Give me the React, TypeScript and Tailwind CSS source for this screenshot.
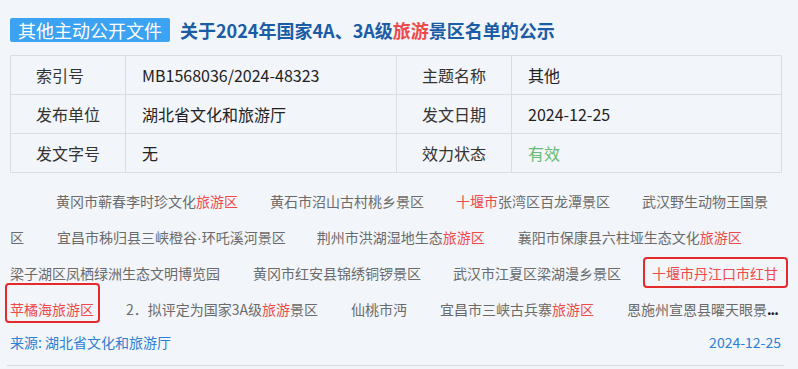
const font = { fontFamily: '"Noto Sans CJK SC", "Noto Sans", sans-serif' };

function Red({ children }: { children: React.ReactNode }) {
  return <span className="text-[#ef4a4a]">{children}</span>;
}

// red annotation frame drawn around a list item
function Boxed({ children, frame }: { children: React.ReactNode; frame: string }) {
  return (
    <span className="relative inline-block h-[36px] leading-[36px] text-[#ef4a4a]">
      {children}
      <span className={"absolute rounded-[4px] border-2 border-[#e42a2a] " + frame} />
    </span>
  );
}

const rows = [
  ["索引号", "MB1568036/2024-48323", "主题名称", "其他"],
  ["发布单位", "湖北省文化和旅游厅", "发文日期", "2024-12-25"],
  ["发文字号", "无", "效力状态", "有效"],
];

export default function App() {
  return (
    <div style={font} className="w-[798px] h-[369px] overflow-hidden bg-[#f2f5f9] pl-[10px] pt-[18px]">
      <div className="w-[771px]">
        {/* Header */}
        <div className="flex items-center h-[24px]">
          <span className="bg-[#3ca2f2] text-white text-[18px] leading-[24px] px-[8px] rounded-[2px] whitespace-nowrap">
            其他主动公开文件
          </span>
          <h1 className="ml-[10px] text-[18px] leading-[24px] font-bold text-[#1a5ca6] whitespace-nowrap">
            关于2024年国家4A、3A级<Red>旅游</Red>景区名单的公示
          </h1>
        </div>

        {/* Meta table */}
        <div className="mt-[13px] grid grid-cols-[115px_271px_115px_270px] border-t border-l border-[#d9dee5] text-[16px]">
          {rows.map((r) =>
            r.map((cell, i) => (
              <div
                key={r[0] + i}
                className={
                  "h-[39px] flex items-center border-r border-b border-[#d9dee5] whitespace-nowrap " +
                  (i % 2 === 0 ? "pl-[25px] text-[#333]" : "pl-[16px] text-[#222]")
                }
              >
                {cell === "有效" ? <span className="text-[#66bb77]">{cell}</span> : cell}
              </div>
            ))
          )}
        </div>

        {/* Summary list */}
        <div className="mt-[10px] text-[14px] text-[#6b6b6b]">
          <div className="h-[36px] leading-[36px] whitespace-nowrap pl-[46px]">
            <span>黄冈市蕲春李时珍文化<Red>旅游区</Red></span>
            <span className="ml-[32px]">黄石市沼山古村桃乡景区</span>
            <span className="ml-[32px]"><Red>十堰市</Red>张湾区百龙潭景区</span>
            <span className="ml-[32px]">武汉野生动物王国景</span>
          </div>
          <div className="h-[36px] leading-[36px] whitespace-nowrap">
            <span>区</span>
            <span className="ml-[33px]">
              宜昌市秭归县三峡橙谷<span className="font-['Liberation_Sans']">·</span>环吒溪河景区
            </span>
            <span className="ml-[31px]">荆州市洪湖湿地生态<Red>旅游区</Red></span>
            <span className="ml-[33px]">襄阳市保康县六柱垭生态文化<Red>旅游区</Red></span>
          </div>
          <div className="h-[36px] leading-[36px] whitespace-nowrap">
            <span>梁子湖区凤栖绿洲生态文明博览园</span>
            <span className="ml-[33px]">黄冈市红安县锦绣铜锣景区</span>
            <span className="ml-[32px]">武汉市江夏区梁湖漫乡景区</span>
            <span className="ml-[31px]">
              <Boxed frame="-left-[9px] -right-[10px] top-[2px] bottom-[3px]">十堰市丹江口市红甘</Boxed>
            </span>
          </div>
          <div className="h-[36px] leading-[36px] whitespace-nowrap">
            <Boxed frame="-left-[5px] -right-[6px] -top-[8px] bottom-[4px]">苹橘海旅游区</Boxed>
            <span className="ml-[32px]">2．拟评定为国家3A级<Red>旅游</Red>景区</span>
            <span className="ml-[33px]">仙桃市沔</span>
            <span className="ml-[33px]">宜昌市三峡古兵寨<Red>旅游区</Red></span>
            <span className="ml-[33px]">恩施州宣恩县曜天眼景</span>
            <span className="text-[#222] font-bold tracking-[-1px]">...</span>
          </div>
        </div>

        {/* Footer */}
        <div className="-mx-[3px] px-[3px] pb-[8px] border-b border-[#d6dbe2]">
          <div className="h-[30px] flex items-center justify-between text-[14px] text-[#2b7fd4] whitespace-nowrap">
            <span>来源: 湖北省文化和旅游厅</span>
            <span>2024-12-25</span>
          </div>
        </div>
      </div>
    </div>
  );
}
